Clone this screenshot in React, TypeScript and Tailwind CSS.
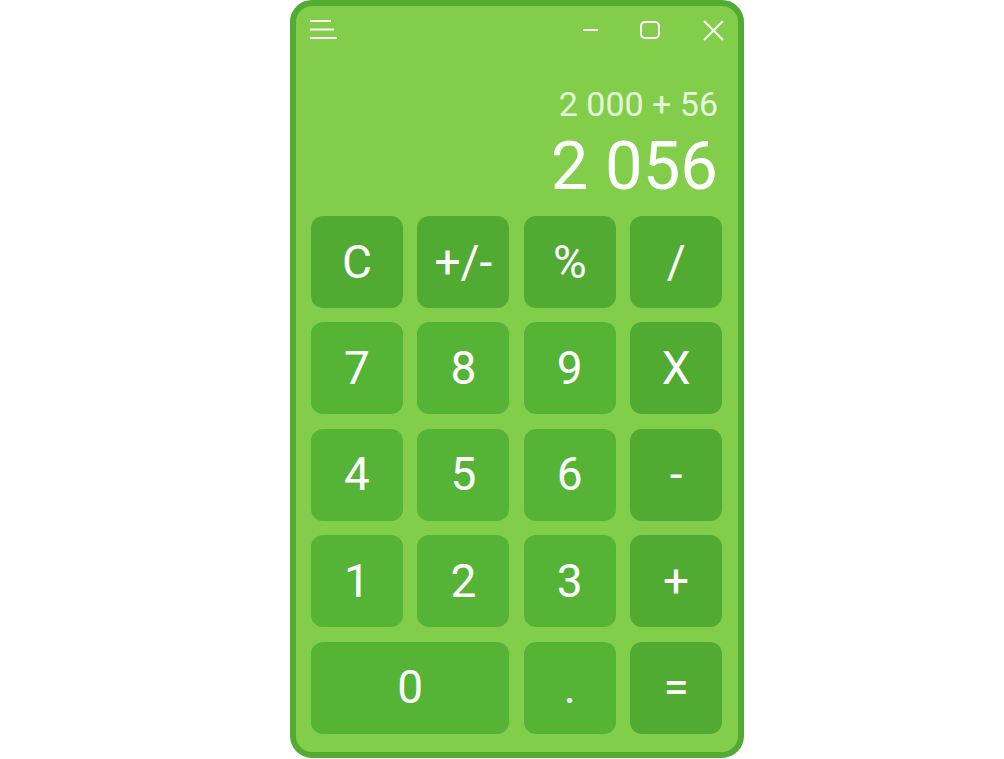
import React from "react";

const keys: { label: string; op?: boolean; wide?: boolean }[] = [
  { label: "C", op: true },
  { label: "+/-", op: true },
  { label: "%", op: true },
  { label: "/", op: true },
  { label: "7" },
  { label: "8" },
  { label: "9" },
  { label: "X", op: true },
  { label: "4" },
  { label: "5" },
  { label: "6" },
  { label: "-", op: true },
  { label: "1" },
  { label: "2" },
  { label: "3" },
  { label: "+", op: true },
  { label: "0", wide: true },
  { label: "." },
  { label: "=", op: true },
];

export default function App() {
  return (
    <div
      className="w-[1004px] h-[759px] bg-white flex"
      style={{ fontFamily: "Roboto, 'Noto Sans', sans-serif" }}
    >
      <div className="ml-[290px] w-[454px] h-[758px] rounded-[22px] border-[6px] border-[#52ab33] bg-[#82ce4a] flex flex-col">
        {/* title bar */}
        <div className="h-[48px] flex items-center pl-[14px] pr-[14px] text-white">
          <svg width="28" height="20" viewBox="0 0 28 20" className="block">
            <line x1="0" y1="1" x2="21" y2="1" stroke="white" strokeWidth="2" />
            <line x1="0" y1="9.5" x2="24" y2="9.5" stroke="white" strokeWidth="2" />
            <line x1="0" y1="18" x2="27" y2="18" stroke="white" strokeWidth="2" />
          </svg>
          <div className="flex-1" />
          <svg width="15" height="2" viewBox="0 0 15 2" className="block">
            <line x1="0" y1="1" x2="15" y2="1" stroke="white" strokeWidth="2" />
          </svg>
          <svg width="20" height="18" viewBox="0 0 20 18" className="block ml-[42px]">
            <rect x="1" y="1" width="18" height="16" rx="4" fill="none" stroke="white" strokeWidth="2" />
          </svg>
          <svg width="21" height="21" viewBox="0 0 21 21" className="block ml-[43px]">
            <line x1="1" y1="1" x2="20" y2="20" stroke="white" strokeWidth="2" />
            <line x1="20" y1="1" x2="1" y2="20" stroke="white" strokeWidth="2" />
          </svg>
        </div>
        {/* display */}
        <div className="pl-[15px] pr-[16px]">
          <div className="flex flex-col items-end pr-[4px] pt-[32px]">
            <div className="text-[34px] leading-[36px] text-white/80">2 000 + 56</div>
            <div className="mt-[8px] text-[67px] leading-[72px] text-white">2 056</div>
          </div>
          <div className="mt-[14px] grid grid-cols-[repeat(4,92px)] auto-rows-[92px] gap-x-[14.4px] gap-y-[14.4px]">
            {keys.map((k) => (
              <div
                key={k.label}
                className={
                  "rounded-[12px] flex items-center justify-center text-white text-[46px] " +
                  (k.op ? "bg-[#51aa32]" : "bg-[#55b436]") +
                  (k.wide ? " col-span-2" : "")
                }
              >
                {k.label}
              </div>
            ))}
          </div>
        </div>
      </div>
    </div>
  );
}
